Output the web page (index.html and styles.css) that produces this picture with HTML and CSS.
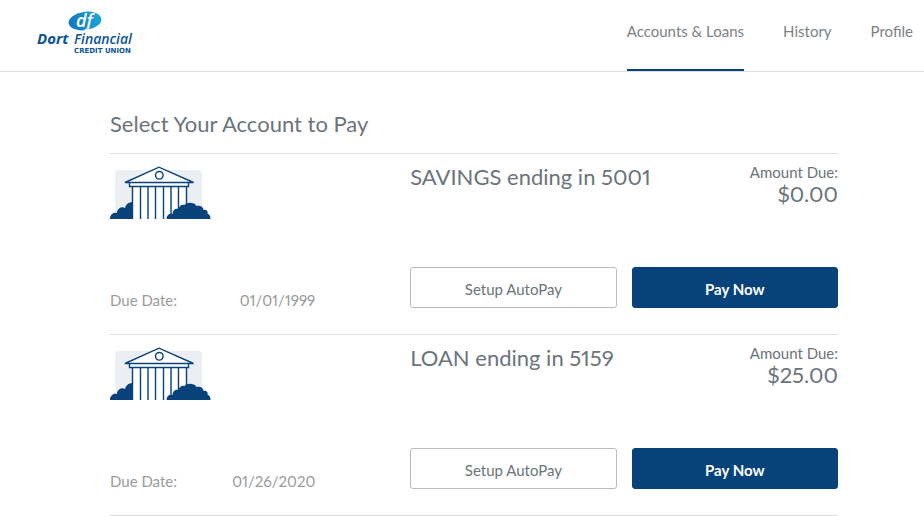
FILE: index.html
```html
<!DOCTYPE html>
<html lang="en">
<head>
  <meta charset="UTF-8" />
  <meta name="viewport" content="width=device-width, initial-scale=1.0"/>
  <title>Accounts &amp; Loans | Dort Financial Credit Union</title>
  <link rel="stylesheet" href="styles.css">
</head>
<body>

  <!-- Shared bank illustration -->
  <svg class="symbols" width="0" height="0" aria-hidden="true">
    <symbol id="bank" viewBox="0 0 101 54">
      <rect x="5" y="4" width="87" height="49" rx="4" fill="#ebeef3"/>
      <path d="M0 53c0-4 3-7 7-6 0-4 4-7 8-5 1-4 4-6 8-6v17z" fill="#08427a"/>
      <path d="M22.500 21h54v32h-54z" fill="#fff"/>
      <path d="M22.500 21v32M30.500 21v32M38 21v32M45.500 21v32M53.500 21v32M61 21v32M68.500 21v32M76.500 21v32" stroke="#08427a" stroke-width="1.400"/>
      <path d="M19.500 16.500h59v4h-59zM15 16.500 49 1.200l34.500 15.300z" fill="#fff" stroke="#08427a" stroke-width="1.400"/>
      <circle cx="49.300" cy="9.300" r="3.800" fill="#fff" stroke="#08427a" stroke-width="1.400"/>
      <path d="M56.500 53c0-4 3-6 6-5 0-4 3-6 6-5 1-3 3-5 6-4 2-3 10-3 12 1 4-1 7 1 7 4 3-1 5 2 4 4 2 0 3 2 3 5z" fill="#08427a"/>
    </symbol>
  </svg>

  <header class="header">
    <a class="logo" href="#" aria-label="Dort Financial Credit Union">
      <svg width="100" height="48" viewBox="0 0 100 48">
        <defs>
          <linearGradient id="oval" x1="0" x2="1">
            <stop offset="0" stop-color="#1377b9"/>
            <stop offset="1" stop-color="#19a8dc"/>
          </linearGradient>
        </defs>
        <ellipse cx="49" cy="13" rx="16.500" ry="9.200" fill="url(#oval)" transform="rotate(-8 49 13)"/>
        <text class="logo-df" x="40" y="19">df</text>
        <text class="logo-name" x="1" y="36">Dort</text>
        <text class="logo-name logo-light" x="38" y="36">Financial</text>
        <text class="logo-sub" x="38" y="45">CREDIT UNION</text>
      </svg>
    </a>
    <nav class="nav">
      <a class="active" href="#">Accounts &amp; Loans</a>
      <a href="#">History</a>
      <a href="#">Profile</a>
    </nav>
  </header>

  <main class="main">
    <h1>Select Your Account to Pay</h1>

    <section class="account">
      <div class="summary">
        <svg class="bank" width="101" height="54" aria-hidden="true"><use href="#bank"/></svg>
        <div class="due-date"><span>Due Date:</span><span>01/01/1999</span></div>
      </div>
      <div class="details">
        <div class="top">
          <h2>SAVINGS ending in 5001</h2>
          <div class="amount"><span>Amount Due:</span><strong>$0.00</strong></div>
        </div>
        <div class="actions">
          <button type="button">Setup AutoPay</button>
          <button type="button" class="pay-btn">Pay Now</button>
        </div>
      </div>
    </section>

    <section class="account">
      <div class="summary">
        <svg class="bank" width="101" height="54" aria-hidden="true"><use href="#bank"/></svg>
        <div class="due-date"><span>Due Date:</span><span>01/26/2020</span></div>
      </div>
      <div class="details">
        <div class="top">
          <h2>LOAN ending in 5159</h2>
          <div class="amount"><span>Amount Due:</span><strong>$25.00</strong></div>
        </div>
        <div class="actions">
          <button type="button">Setup AutoPay</button>
          <button type="button" class="pay-btn">Pay Now</button>
        </div>
      </div>
    </section>
  </main>

</body>
</html>
```
FILE: styles.css
```css
* {
  box-sizing: border-box;
  margin: 0;
  padding: 0;
}

body {
  background: #fff;
  color: #6b747a;
  font-family: Lato, "Open Sans", sans-serif;
  font-size: 15px;
  line-height: 20px;
  font-variant-numeric: proportional-nums;
}

.symbols {
  display: block;
}

.header {
  display: flex;
  justify-content: space-between;
  border-bottom: 1px solid #dcdedf;
  padding: 0 11px 0 36px;
}

.logo {
  padding-top: 8px;
}

.logo svg {
  display: block;
  overflow: visible;
}

.logo-df,
.logo-name {
  font-family: "Open Sans", sans-serif;
  font-style: italic;
  font-weight: 700;
  font-size: 15px;
  fill: #0b5499;
}

.logo-df {
  font-size: 18px;
  font-weight: 600;
  fill: #fff;
}

.logo-light {
  font-weight: 600;
  font-size: 14px;
}

.logo-sub {
  font-family: "DejaVu Sans", sans-serif;
  font-weight: 700;
  font-size: 7px;
  fill: #0b5499;
}

.nav {
  display: flex;
  gap: 39px;
}

.nav a {
  padding: 21px 0 28px;
  border-bottom: 2px solid transparent;
  color: #7b8287;
  text-decoration: none;
}

.nav a.active {
  border-color: #08427a;
}

.main {
  padding: 37px 86px 0 110px;
}

h1,
h2,
.amount strong {
  font-size: 22px;
  font-weight: 400;
  line-height: 30px;
}

h1 {
  padding-bottom: 14px;
}

.account {
  display: grid;
  grid-template-columns: 2fr 3fr;
  gap: 15px;
  padding: 8px 0 26px;
  border-top: 1px solid #dcdedf;
}

.account:last-child {
  border-bottom: 1px solid #dcdedf;
}

.summary,
.details {
  display: flex;
  flex-direction: column;
  justify-content: space-between;
}

.bank {
  margin-top: 4px;
}

.due-date {
  display: flex;
  justify-content: space-between;
  width: 72%;
  margin-bottom: -2px;
  color: #999b9d;
}

.top {
  display: flex;
  justify-content: space-between;
  min-height: 105px;
}

.amount {
  display: flex;
  flex-direction: column;
  align-items: flex-end;
}

.amount strong {
  line-height: 24px;
}

.actions {
  display: grid;
  grid-template-columns: 1fr 1fr;
  gap: 15px;
}

button {
  height: 41px;
  padding-top: 3px;
  border: 1px solid #b9bcbe;
  border-radius: 3px;
  background: #fff;
  color: #6b747a;
  font-family: inherit;
  font-size: 15px;
  cursor: pointer;
}

.pay-btn {
  border-color: #08427a;
  background: #08427a;
  color: #fff;
  font-weight: 700;
}
```
